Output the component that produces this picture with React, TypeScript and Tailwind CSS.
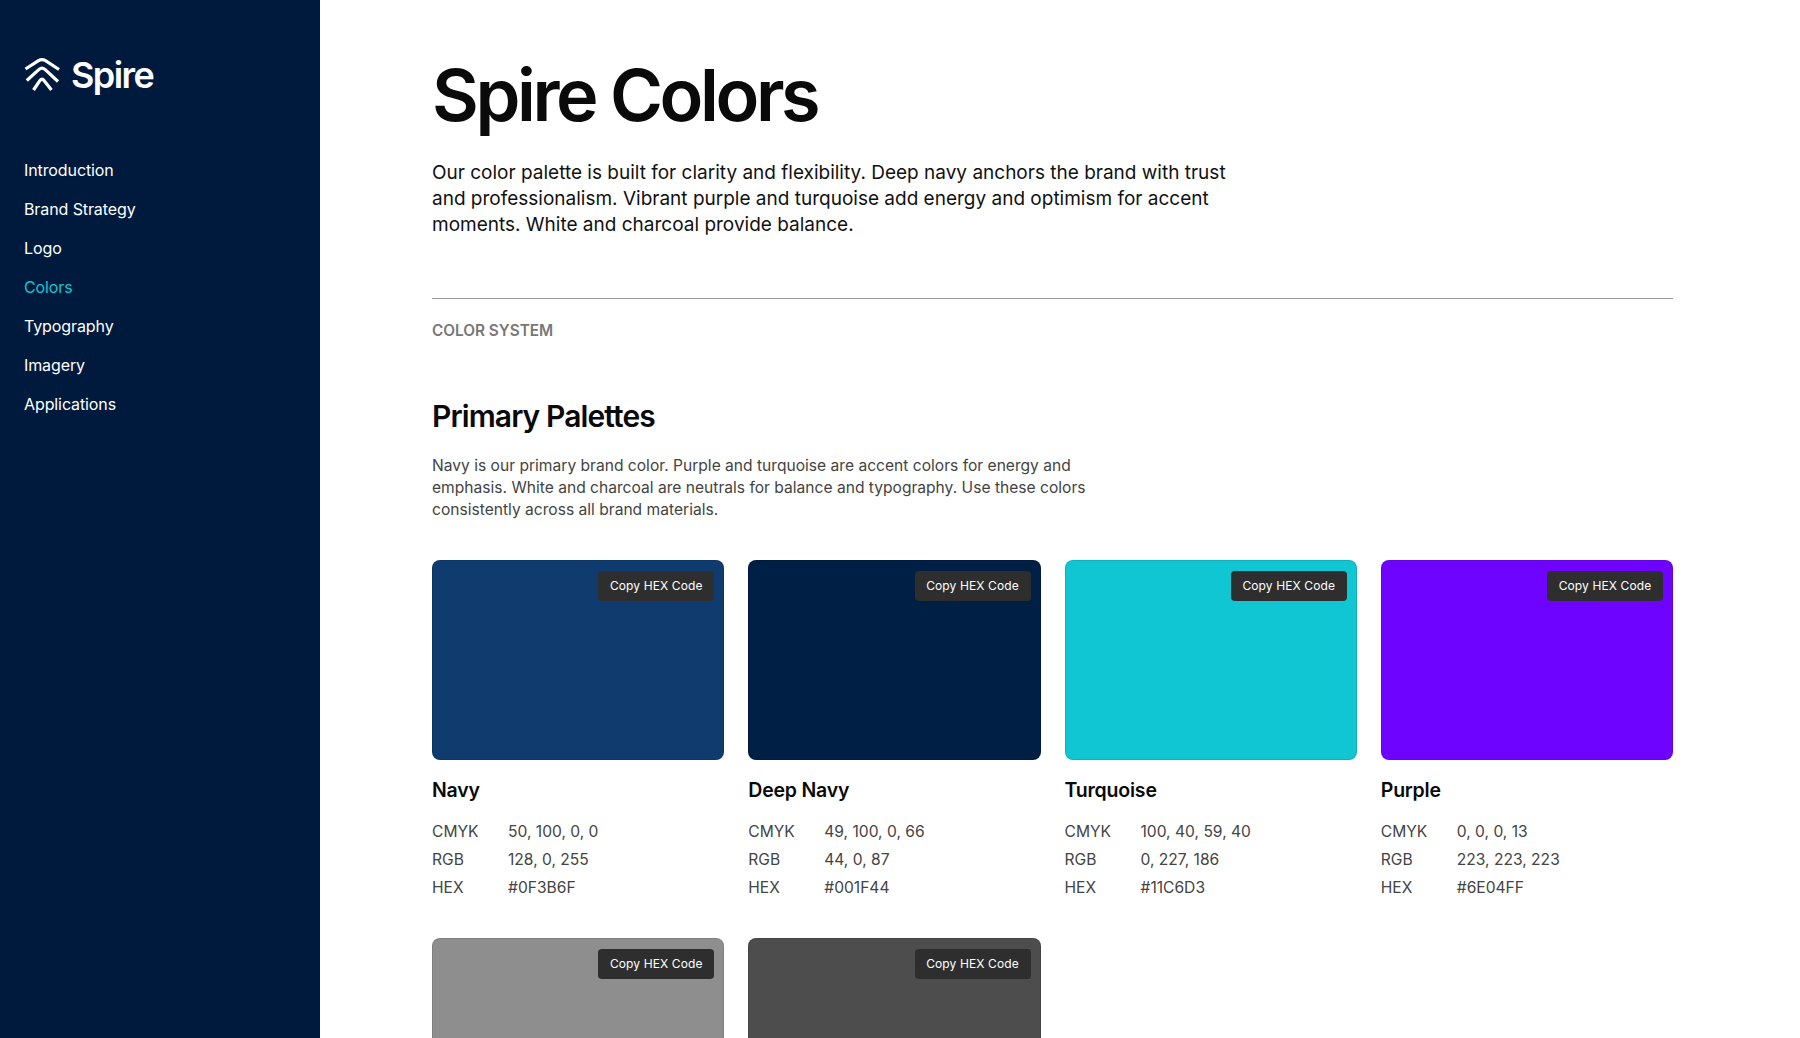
import React from 'react';

const navItems = ['Introduction', 'Brand Strategy', 'Logo', 'Colors', 'Typography', 'Imagery', 'Applications'];

const palette = [
    { name: 'Navy', color: 'bg-[#0f3b6f]', cmyk: '50, 100, 0, 0', rgb: '128, 0, 255', hex: '#0F3B6F' },
    { name: 'Deep Navy', color: 'bg-[#001f44]', cmyk: '49, 100, 0, 66', rgb: '44, 0, 87', hex: '#001F44' },
    { name: 'Turquoise', color: 'bg-[#11c6d3]', cmyk: '100, 40, 59, 40', rgb: '0, 227, 186', hex: '#11C6D3' },
    { name: 'Purple', color: 'bg-[#6e04ff]', cmyk: '0, 0, 0, 13', rgb: '223, 223, 223', hex: '#6E04FF' },
];

// second row runs past the bottom of the window, only the swatches show
const neutrals = ['bg-[#8e8e8e]', 'bg-[#4d4d4d]'];

function Logo() {
    return (
        <svg width="36" height="34" viewBox="0 0 36 34" fill="none" stroke="white" strokeWidth="3.2" className="-mt-[3px] shrink-0">
            <path d="M1.5 12 L14.5 3.6 Q18 1.6 21.5 3.6 L35 12.5" />
            <path d="M2.8 23.5 L15 12.4 Q18 10 21 12.4 L34 24.5" />
            <path d="M9.5 33 L16 23.4 Q18 20.8 20 23.4 L27.5 33" />
        </svg>
    );
}

function SwatchBox({ color }: { color: string }) {
    return (
        <div className={`${color} relative h-[200px] rounded-lg border border-black/10`}>
            <button className="absolute right-[9px] top-[10px] h-[30px] w-[116px] rounded bg-[#2e2e2e] text-[12px] tracking-[0.12px] text-white">
                Copy HEX Code
            </button>
        </div>
    );
}

function Swatch({ item }: { item: (typeof palette)[number] }) {
    return (
        <div>
            <SwatchBox color={item.color} />
            <h3 className="mt-[16px] text-[19.5px] font-semibold leading-[28px] tracking-[-0.2px] text-[#0a0a0a]">{item.name}</h3>
            <div className="mt-[14px] grid grid-cols-[76px_1fr] text-[15.6px] leading-[28px] text-[#444444]">
                <span>CMYK</span>
                <span>{item.cmyk}</span>
                <span>RGB</span>
                <span>{item.rgb}</span>
                <span>HEX</span>
                <span>{item.hex}</span>
            </div>
        </div>
    );
}

export default function App() {
    return (
        <div className="flex h-screen overflow-hidden bg-white font-['Inter',sans-serif]">
            {/* Sidebar */}
            <aside className="w-[320px] shrink-0 bg-[#001a3d] pl-6 pt-[55px]">
                <div className="flex items-center gap-[11px]">
                    <Logo />
                    <span className="text-[36px] font-semibold leading-[40px] tracking-[-1.6px] text-white">Spire</span>
                </div>
                <nav className="mt-[63px] flex flex-col gap-[15px]">
                    {navItems.map((item) => (
                        <a key={item} className={`text-[16px] leading-[24px] tracking-[-0.1px] ${item === 'Colors' ? 'text-[#11c6d3]' : 'text-white'}`}>
                            {item}
                        </a>
                    ))}
                </nav>
            </aside>

            {/* Main content */}
            <main className="flex-1 pl-[112px] pr-[127px] pt-[50px]">
                <h1 className="text-[72px] font-semibold leading-[90px] tracking-[-3.4px] text-[#0a0a0a]">Spire Colors</h1>
                <p className="mt-[20px] w-[830px] text-[19px] leading-[26px] text-[#111111]">
                    Our color palette is built for clarity and flexibility. Deep navy anchors the brand with trust and professionalism. Vibrant purple and turquoise add energy and optimism for accent moments. White and charcoal provide balance.
                </p>
                <div className="mt-[60px] border-t border-[#9a9a9a]" />
                <p className="mt-[22px] text-[15.3px] font-semibold leading-[20px] text-[#777777]">COLOR SYSTEM</p>
                <h2 className="mt-[55px] text-[30px] font-semibold leading-[40px] tracking-[-0.9px] text-[#0a0a0a]">Primary Palettes</h2>
                <p className="mt-[19px] w-[680px] text-[15.6px] leading-[22px] text-[#444444]">
                    Navy is our primary brand color. Purple and turquoise are accent colors for energy and emphasis. White and charcoal are neutrals for balance and typography. Use these colors consistently across all brand materials.
                </p>
                <div className="mt-[39px] grid grid-cols-4 gap-x-6 gap-y-[36px]">
                    {palette.map((item) => (
                        <Swatch key={item.name} item={item} />
                    ))}
                    {neutrals.map((color) => (
                        <SwatchBox key={color} color={color} />
                    ))}
                </div>
            </main>
        </div>
    );
}
